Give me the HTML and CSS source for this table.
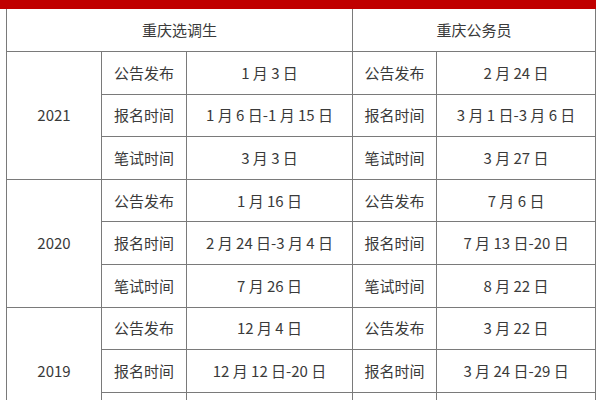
FILE: index.html
```html
<!DOCTYPE html>
<html lang="zh">
<head>
<meta charset="utf-8">
<title>重庆选调生 / 重庆公务员</title>
<link rel="stylesheet" href="styles.css">
</head>
<body>
<div class="topbar"></div>
<table class="sched">
  <colgroup>
    <col class="c-year"><col class="c-label"><col class="c-date1"><col class="c-label2"><col class="c-date2">
  </colgroup>
  <tr class="head">
    <td colspan="3">重庆选调生</td>
    <td colspan="2">重庆公务员</td>
  </tr>
  <tr><td rowspan="3">2021</td><td>公告发布</td><td>1 月 3 日</td><td>公告发布</td><td>2 月 24 日</td></tr>
  <tr><td>报名时间</td><td>1 月 6 日-1 月 15 日</td><td>报名时间</td><td>3 月 1 日-3 月 6 日</td></tr>
  <tr><td>笔试时间</td><td>3 月 3 日</td><td>笔试时间</td><td>3 月 27 日</td></tr>
  <tr><td rowspan="3">2020</td><td>公告发布</td><td>1 月 16 日</td><td>公告发布</td><td>7 月 6 日</td></tr>
  <tr><td>报名时间</td><td>2 月 24 日-3 月 4 日</td><td>报名时间</td><td>7 月 13 日-20 日</td></tr>
  <tr><td>笔试时间</td><td>7 月 26 日</td><td>笔试时间</td><td>8 月 22 日</td></tr>
  <tr><td rowspan="3">2019</td><td>公告发布</td><td>12 月 4 日</td><td>公告发布</td><td>3 月 22 日</td></tr>
  <tr><td>报名时间</td><td>12 月 12 日-20 日</td><td>报名时间</td><td>3 月 24 日-29 日</td></tr>
  <tr><td>笔试时间</td><td>12 月 20 日</td><td>笔试时间</td><td>4 月 25 日</td></tr>
</table>
</body>
</html>
```
FILE: styles.css
```css
html, body {
  margin: 0;
  padding: 0;
  background: #fff;
}
body {
  width: 600px;
  height: 400px;
  overflow: hidden;
  font-family: "Noto Sans CJK SC", "Noto Sans", sans-serif;
  color: #3a3a3a;
}
.topbar {
  width: 596px;
  height: 9px;
  background: #c00000;
}
.sched {
  margin-left: 6px;
  width: 589px;
  border-collapse: collapse;
  table-layout: fixed;
  font-size: 15px;
  line-height: 20px;
}
.c-year { width: 95px; }
.c-label { width: 85px; }
.c-date1 { width: 166px; }
.c-label2 { width: 84px; }
.c-date2 { width: 159px; }
.sched td {
  border: 1px solid #7a7a7a;
  text-align: center;
  vertical-align: middle;
  height: 41.6px;
  padding: 0;
  white-space: nowrap;
}
.sched .head td {
  height: 42px;
  border-top: none;
}
```
